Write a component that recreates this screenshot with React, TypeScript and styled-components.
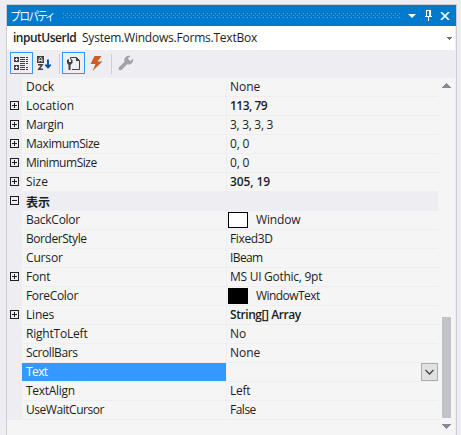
import React from "react";
import styled, { createGlobalStyle } from "styled-components";

const Global = createGlobalStyle`
  * { box-sizing: border-box; }
  body {
    margin: 0;
    background: #eeeef2;
    color: #1e1e1e;
    font: 12px/18px "Open Sans", "Noto Sans CJK JP", sans-serif;
  }
`;

const Page = styled.div`
  height: 435px;
  overflow: hidden;
  padding: 4px 4px 0 6px;
`;

const Panel = styled.section`
  width: 451px;
  height: 431px;
  display: flex;
  flex-direction: column;
  border: 1px solid #cccedb;
  border-bottom: 0;
`;

const TitleBar = styled.header`
  flex: none;
  height: 21px;
  display: flex;
  align-items: center;
  padding-left: 4px;
  background: #007acc;
  color: #fff;
`;

const Title = styled.h1`
  width: 52px;
  margin: 0;
  font: 12px/20px "Noto Sans CJK JP", sans-serif;
  font-feature-settings: "palt";
  letter-spacing: -1.1px;
  white-space: nowrap;
  transform: scaleX(0.87);
  transform-origin: left;
`;

const Grip = styled.svg`
  display: block;
  width: 337px;
  height: 5px;
  flex: none;
`;

const TitleIcon = styled.svg<{ $gap: number }>`
  display: block;
  flex: none;
  margin-left: ${(p) => p.$gap}px;
`;

const ObjectPicker = styled.div`
  flex: none;
  height: 24px;
  display: flex;
  align-items: center;
  margin-right: 1px;
  padding: 0 3px 0 6px;
  background: #fff;
`;

const Txt = styled.span<{ $bold?: boolean; $track?: number }>`
  font-weight: ${(p) => (p.$bold ? 600 : 400)};
  letter-spacing: ${(p) => p.$track ?? 0}px;
  white-space: pre;
`;

const ObjectName = styled(Txt)`
  width: 69px;
`;

const TypeName = styled(Txt)`
  flex: 1;
`;

const ToolBar = styled.div`
  flex: none;
  height: 28px;
  display: flex;
  align-items: flex-start;
  padding: 2px 0 0 3px;
`;

const ToolButton = styled.button<{ $on?: boolean }>`
  width: 23px;
  height: 22px;
  padding: 0;
  display: grid;
  place-items: center;
  border: 1px solid ${(p) => (p.$on ? "#3399ff" : "transparent")};
  background: transparent;
`;

const Divider = styled.i`
  width: 1px;
  height: 20px;
  margin: 2px 2px 0 3px;
  background: #cccedb;
`;

const Body = styled.div`
  flex: 1;
  display: flex;
  margin-right: 1px;
  background: #f5f5f5;
`;

const Rows = styled.div`
  width: 431px;
`;

const Row = styled.div`
  height: 19px;
  display: grid;
  grid-template-columns: 15px 204px 1fr;
  background: #eeeef2;
`;

const Gutter = styled.div`
  padding: 4px 0 0 3px;
`;

const Name = styled.div<{ $selected?: boolean }>`
  height: 18px;
  padding-left: 4px;
  background: ${(p) => (p.$selected ? "#3399ff" : "#f5f5f5")};
  color: ${(p) => (p.$selected ? "#fff" : "inherit")};
`;

const Value = styled.div`
  height: 18px;
  margin-left: 1px;
  padding-left: 3px;
  display: flex;
  background: #f5f5f5;
`;

const Category = styled.div`
  grid-column: 2 / -1;
  padding-left: 4px;
  font: 700 12px/19px "Noto Sans CJK JP", sans-serif;
`;

const Swatch = styled.i<{ $color: string }>`
  width: 20px;
  height: 16px;
  margin: 1px 8px 0 -2px;
  border: 1px solid #000;
  background: ${(p) => p.$color};
`;

const DropButton = styled.button`
  width: 17px;
  height: 18px;
  margin-left: auto;
  padding: 0;
  display: grid;
  place-items: center;
  border: 1px solid #acacac;
  background: #e1e1e1;
`;

const ScrollBar = styled.div`
  flex: 1;
  display: flex;
  flex-direction: column;
  align-items: center;
  padding: 5px 0 6px;
`;

const Thumb = styled.div`
  width: 9px;
  height: 101px;
  margin: auto 0 6px;
  background: #c2c3c9;
`;

const Triangle = ({ up }: { up?: boolean }) => (
  <svg width="9" height="5" shapeRendering="crispEdges" fill="#868999">
    <path d={up ? "M4 0h1v1h1v1h1v1h1v1h1v1H0V4h1V3h1V2h1V1h1z" : "M0 0h9v1H8v1H7v1H6v1H5v1H4V4H3V3H2V2H1V1H0z"} />
  </svg>
);

const Expander = ({ open }: { open?: boolean }) => (
  <svg width="9" height="9" display="block" shapeRendering="crispEdges">
    <path d="M0 0h9v9H0zM1 1v7h7V1z" fill="#1e1e1e" fillRule="evenodd" />
    <path d={open ? "M2 4h5v1H2z" : "M2 4h5v1H2zM4 2h1v5H4z"} fill="#1e1e1e" />
  </svg>
);

type Prop = {
  name: string;
  value?: string;
  bold?: boolean;
  expand?: boolean;
  color?: string;
  selected?: boolean;
  category?: boolean;
  nt?: number;
  vt?: number;
};

const props: Prop[] = [
  { name: "Dock", value: "None" },
  { name: "Location", value: "113, 79", bold: true, expand: true, vt: -0.5, nt: 0.05 },
  { name: "Margin", value: "3, 3, 3, 3", expand: true, nt: -0.3, vt: -0.3 },
  { name: "MaximumSize", value: "0, 0", expand: true, nt: -0.45, vt: -0.2 },
  { name: "MinimumSize", value: "0, 0", expand: true, nt: -0.45, vt: -0.2 },
  { name: "Size", value: "305, 19", bold: true, expand: true, vt: -0.1 },
  { name: "表示", category: true },
  { name: "BackColor", value: "Window", color: "#fff", nt: -0.28, vt: -0.15 },
  { name: "BorderStyle", value: "Fixed3D", nt: -0.45, vt: -0.35 },
  { name: "Cursor", value: "IBeam", nt: -0.15, vt: -0.6 },
  { name: "Font", value: "MS UI Gothic, 9pt", expand: true, nt: -0.2, vt: -0.27 },
  { name: "ForeColor", value: "WindowText", color: "#000", nt: -0.33, vt: -0.55 },
  { name: "Lines", value: "String[] Array", bold: true, expand: true, nt: -0.2, vt: -0.43 },
  { name: "RightToLeft", value: "No", nt: -0.2 },
  { name: "ScrollBars", value: "None", nt: -0.4 },
  { name: "Text", selected: true, nt: -0.6 },
  { name: "TextAlign", value: "Left", nt: -0.3, vt: -0.3 },
  { name: "UseWaitCursor", value: "False", nt: -0.46, vt: -0.5 },
];

export default function App() {
  return (
    <Page>
      <Global />
      <Panel>
        <TitleBar>
          <Title>プロパティ</Title>
          <Grip shapeRendering="crispEdges">
            <defs>
              <pattern id="dots" width="4" height="4" patternUnits="userSpaceOnUse">
                <path d="M0 0h1v1H0zM2 2h1v1H2z" fill="#59a8de" />
              </pattern>
            </defs>
            <rect width="337" height="5" fill="url(#dots)" />
          </Grip>
          <TitleIcon $gap={8} width="8" height="4" fill="#fff">
            <path d="M0 0h8L4 4z" />
          </TitleIcon>
          <TitleIcon $gap={9} width="7" height="11" fill="#fff" shapeRendering="crispEdges">
            <path d="M1 0h5v6h1v1H4v4H3V7H0V6h1zM2 1v5h2V1z" fillRule="evenodd" />
          </TitleIcon>
          <TitleIcon $gap={8} width="10" height="8" stroke="#fff" strokeWidth="1.7">
            <path d="M1 0l8 8M9 0L1 8" />
          </TitleIcon>
        </TitleBar>
        <ObjectPicker>
          <ObjectName $bold $track={-0.5}>inputUserId</ObjectName>
          <TypeName $track={-0.22}>System.Windows.Forms.TextBox</TypeName>
          <svg width="5" height="3" fill="#717171" shapeRendering="crispEdges">
            <path d="M0 0h5v1H4v1H3v1H2V2H1V1H0z" />
          </svg>
        </ObjectPicker>
        <ToolBar>
          <ToolButton $on aria-label="Categorized">
            <svg width="15" height="15" fill="#424242" shapeRendering="crispEdges">
              <path d="M0 1h5v5H0zM2 2v1H1v1h1v1h1V4h1V3H3V2zM0 9h5v5H0zM2 10v1H1v1h1v1h1v-1h1v-1H3v-1z" fillRule="evenodd" />
              <path d="M6 1h5v1H6zM6 3h5v1H6zM6 5h5v1H6zM6 7h5v1H6zM6 9h5v1H6zM6 11h5v1H6zM6 13h5v1H6zM12 1h2v1h-2zM12 3h2v1h-2zM12 5h2v1h-2zM12 7h2v1h-2zM12 11h2v1h-2zM12 13h2v1h-2z" />
            </svg>
          </ToolButton>
          <ToolButton aria-label="Alphabetical">
            <svg width="15" height="15">
              <path d="M0 0h7v7H0z" fill="#424242" />
              <path d="M2 6V3l1-1.500h1L5 3v3M2 4.500h3" stroke="#eeeef2" strokeWidth=".9" fill="none" />
              <path d="M1 8.700h4.200L1.800 13.300H6" stroke="#424242" strokeWidth="1.5" fill="none" />
              <path d="M11 3.500v8M8.300 8.700L11 11.400l2.700-2.700" stroke="#00539c" strokeWidth="1.9" fill="none" />
            </svg>
          </ToolButton>
          <Divider />
          <ToolButton $on aria-label="Properties">
            <svg width="15" height="15">
              <path d="M4.5 3.5v-2h6l3 3v9H6" fill="none" stroke="#424242" />
              <path d="M10 1v4h4z" fill="#424242" />
              <path d="M1 4v3l1.5 2V14h2V9L6.500 7V4L5 3v3H3V3z" fill="#424242" />
            </svg>
          </ToolButton>
          <ToolButton aria-label="Events">
            <svg width="13" height="15" fill="#ca5f25">
              <path d="M4.500 0h7L7.500 5.500h5L2.500 15l3-7H.5z" />
            </svg>
          </ToolButton>
          <Divider />
          <ToolButton aria-label="Property pages">
            <svg width="16" height="16" fill="#a2a2a6">
              <path d="M1 12.200L6.500 6.700C5.500 3 8.500.2 12.500 1L9.800 3.600 12.400 6.200 15.100 3.500C15.800 7.500 12.500 10.500 9 9.300L3.800 14.800Q2.300 15.800 1.100 14.800Q0 13.500 1 12.200z" />
            </svg>
          </ToolButton>
        </ToolBar>
        <Body>
          <Rows>
            {props.map((p) => (
              <Row key={p.name}>
                <Gutter>{(p.expand || p.category) && <Expander open={p.category} />}</Gutter>
                {p.category ? (
                  <Category>{p.name}</Category>
                ) : (
                  <>
                    <Name $selected={p.selected}>
                      <Txt $track={p.nt}>{p.name}</Txt>
                    </Name>
                    <Value>
                      {p.color && <Swatch $color={p.color} />}
                      <Txt $bold={p.bold} $track={p.vt}>{p.value}</Txt>
                      {p.selected && (
                        <DropButton aria-label="Open">
                          <svg width="9" height="6" fill="none" stroke="#444" strokeWidth="1.3">
                            <path d="M.5 1l4 4 4-4" />
                          </svg>
                        </DropButton>
                      )}
                    </Value>
                  </>
                )}
              </Row>
            ))}
          </Rows>
          <ScrollBar>
            <Triangle up />
            <Thumb />
            <Triangle />
          </ScrollBar>
        </Body>
      </Panel>
    </Page>
  );
}
